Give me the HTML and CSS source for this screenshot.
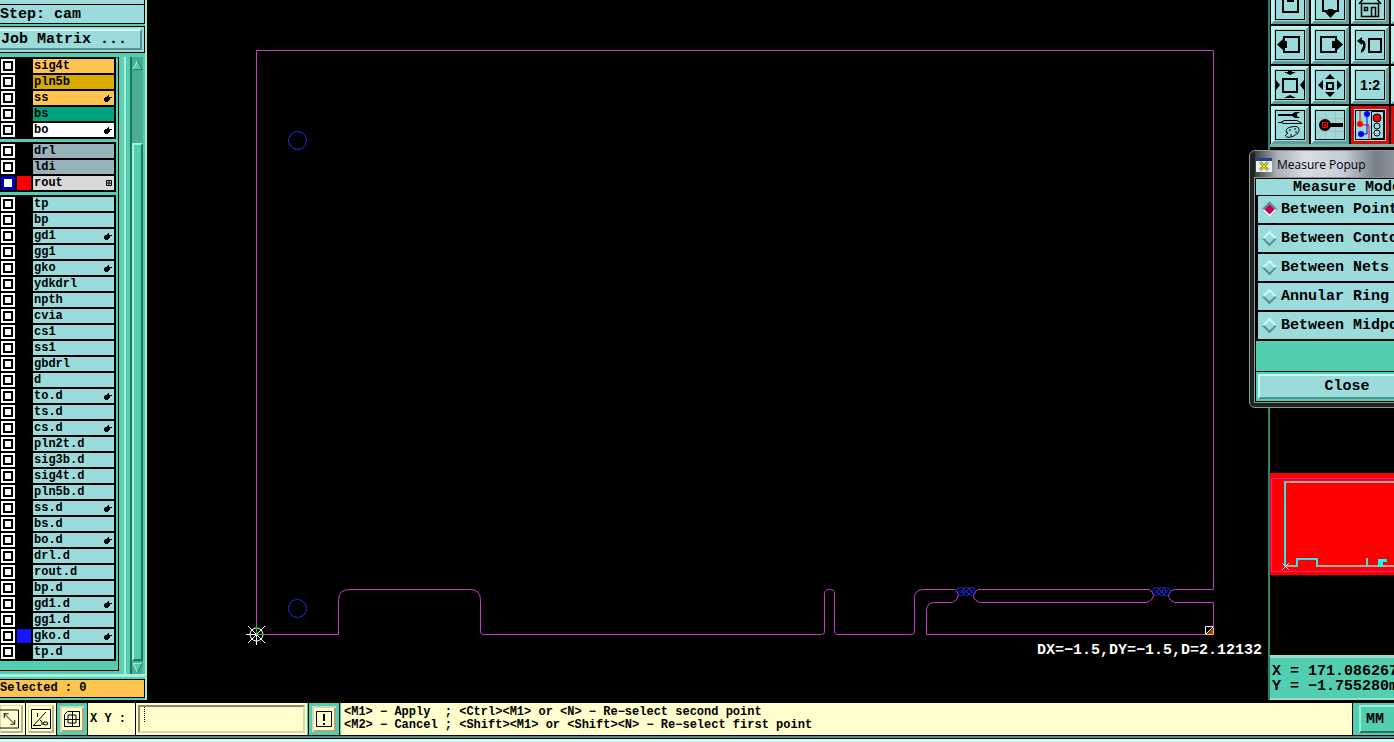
FILE: index.html
```html
<!DOCTYPE html>
<html lang="en">
<head>
  <meta charset="UTF-8">
  <title>Graphic Editor</title>
  <link rel="stylesheet" href="styles.css">
</head>
<body>

  <svg class="defs" width="0" height="0">
    <symbol id="hand" viewBox="0 0 8 7"><path d="M4 0H5V2H8V3H6V5H5V6H4V7H1V6H0V3H1V2H3V1H4Z"/></symbol>
    <symbol id="grid" viewBox="0 0 6 6"><path d="M.5.5H5.5V5.5H.5ZM3 .5V5.5M.5 3H5.5" fill="none" stroke="#000"/></symbol>
  </svg>

  <div class="workspace">
    <aside class="sidebar">
      <div class="field field-top"></div>
      <div class="field">Step: cam</div>
      <div class="button-frame"><button class="matrix">Job Matrix ...</button></div>
      <div class="list-area">
        <div class="layers" id="layers"></div>
        <div class="groove"></div>
        <div class="scrollbar">
          <svg class="arrow" viewBox="0 0 12 12"><path d="M6 1L11 11H1Z" fill="#52cfb0"/><path d="M6 1L1 11" stroke="#b5f2e4" fill="none"/><path d="M6 1L11 11H1" stroke="#27715f" fill="none"/></svg>
          <div class="trough"></div>
          <div class="thumb"></div>
          <svg class="arrow" viewBox="0 0 12 12"><path d="M1 1H11L6 11Z" fill="#52cfb0"/><path d="M11 1H1L6 11" stroke="#b5f2e4" fill="none"/><path d="M11 1L6 11" stroke="#27715f" fill="none"/></svg>
        </div>
      </div>
      <div class="selected">Selected : 0</div>
    </aside>

    <main class="canvas">
      <svg viewBox="147 0 1121 702">
        <g class="outline">
          <path d="M256.500 634.500V50.500H1213.500V589.500H1175.500Q1168.500 590.500 1168.500 596.500Q1169.500 600.500 1174.500 602.500H1213.500V634.500H926.500V609.500Q927.500 602.500 934.500 602.500H952.500Q958.500 599.500 958.500 594.500Q957.500 590.500 954.500 589.500H922.500Q914.500 590.500 914.500 597.500V631.500Q914.500 634.500 911.500 634.500H837.500Q834.500 634.500 834.500 631.500V593.500Q834.500 589.500 829.500 589.500T824.500 593.500V631.500Q824.500 634.500 821.500 634.500H483.500Q480.500 634.500 480.500 631.500V600.500Q480.500 589.500 470.500 589.500H349.500Q338.500 589.500 338.500 600.500V634.500Z"/>
          <path d="M977.500 589.500H1149.500Q1153.500 592.500 1153.500 595.500Q1152.500 600.500 1146.500 602.500H980.500Q973.500 600.500 973.500 595.500Q974.500 591.500 977.500 589.500Z"/>
        </g>
        <g class="hole">
          <circle cx="297.500" cy="140.500" r="9"/>
          <circle cx="297.500" cy="608.500" r="9"/>
          <circle cx="960.500" cy="591.500" r="4"/><circle cx="966.500" cy="591.500" r="4"/><circle cx="971.500" cy="591.500" r="4"/>
          <circle cx="960.500" cy="591.500" r="1"/><circle cx="966.500" cy="591.500" r="1"/><circle cx="971.500" cy="591.500" r="1"/>
          <circle cx="1156.500" cy="591.500" r="4"/><circle cx="1161.500" cy="591.500" r="4"/><circle cx="1166.500" cy="591.500" r="4"/>
          <circle cx="1156.500" cy="591.500" r="1"/><circle cx="1161.500" cy="591.500" r="1"/><circle cx="1166.500" cy="591.500" r="1"/>
        </g>
        <g class="origin">
          <circle cx="256.500" cy="634.500" r="6.500"/>
          <path d="M246 634.500H256M256.500 635V645M256.500 624V634M248 626L265 643M265 626L248 643"/>
          <path class="axis" d="M256.500 624V634.500H266"/>
        </g>
        <path d="M1207 634H1213V628Z" fill="#b33b00"/>
        <path d="M1206 634.500H1213.500V628" stroke="#e3d01c" fill="none"/>
        <path d="M1213 626.500H1205.500V634M1206 634L1213 627" class="cursor"/>
        <text x="1037" y="654">DX=−1.5,DY=−1.5,D=2.12132</text>
      </svg>
    </main>

    <aside class="right-panel">
      <div class="tools">
        <button class="tool" aria-label="Pan up"><svg viewBox="0 0 30 30"><rect x="8" y="8" width="15" height="14" class="s2"/><path d="M12 2H19V12H12Z"/></svg></button>
        <button class="tool" aria-label="Pan down"><svg viewBox="0 0 30 30"><rect x="8" y="6" width="15" height="15" class="s2"/><path d="M13 19H18V22H21L15.500 28L10 22H13Z"/></svg></button>
        <button class="tool" aria-label="Home"><svg viewBox="0 0 30 30"><path class="s1" d="M4 14L9 8H21L26 14M6.500 13.500H23.500V26.500H6.500ZM16.500 26V17.500H20.500V26M9.500 17.500H12.500V20.500H9.500ZM20.500 8V4" stroke-width="1.500"/></svg></button>
        <button class="tool" aria-label="More"></button>

        <button class="tool" aria-label="Pan left"><svg viewBox="0 0 30 30"><rect x="9" y="7" width="15" height="15" class="s2"/><path d="M2 14.500L8 9V11H12V18H8V20Z"/></svg></button>
        <button class="tool" aria-label="Pan right"><svg viewBox="0 0 30 30"><rect x="6" y="7" width="15" height="15" class="s2"/><path d="M28 14.500L22 9V11H17V18H22V20Z"/></svg></button>
        <button class="tool" aria-label="Previous view"><svg viewBox="0 0 30 30"><rect x="14" y="9" width="12" height="13" class="s2"/><path d="M2 11L7 7V10C12 10 12 21 6 23V20C8 18 9 14 7 13V15Z"/></svg></button>
        <button class="tool" aria-label="More"></button>

        <button class="tool" aria-label="Zoom out"><svg viewBox="0 0 30 30"><rect x="8" y="9" width="14" height="13" class="s2"/><path d="M9 2H13V0H17V2H21L15 5ZM9 28L15 25L21 28ZM1 10L5 15L1 20ZM29 10L25 15L29 20Z"/></svg></button>
        <button class="tool" aria-label="Zoom in"><svg viewBox="0 0 30 30"><rect x="12" y="13" width="6" height="6" class="s2"/><path d="M15 4L20 9H10ZM15 27L20 22H10ZM3 15L8 10V20ZM27 15L22 10V20Z"/></svg></button>
        <button class="tool" aria-label="Zoom 1:2"><svg viewBox="0 0 30 30"><text x="15" y="20" class="ratio">1:2</text></svg></button>
        <button class="tool" aria-label="More"></button>

        <button class="tool" aria-label="Edit tools"><svg viewBox="0 0 30 30"><path d="M3 4H17L20 2H25L22 4V6L25 8H20L17 6H3Z"/><path class="s1" d="M3 12.500H6L9 10.500H22L27 13.500H9L6 12.500M11.500 22.500C10 18 15 16.500 21 16.500C26 17 24 24 20 25C17 28 10 28 10.500 25L13 23ZM14 20H16M19 19H21M20 22H22M15 25H17"/></svg></button>
        <button class="tool" aria-label="Probe"><svg viewBox="0 0 30 30"><path d="M10.500 0V30M20.500 0V30M0 8.500H30M0 21.500H30" stroke="#b9b4bd"/><circle cx="10" cy="15" r="6"/><path d="M15 13H28V17H15Z"/><path d="M7.500 12.500H12.500V17.500H7.500ZM9.500 14.500H11V16H9.500Z" fill="none" stroke="#f00"/></svg></button>
        <button class="tool active" aria-label="Measure"><svg viewBox="0 0 30 30"><path d="M5 1V15M5 15H14V29" stroke="#f00" fill="none"/><path d="M12 5V24H6" stroke="#00f" stroke-width="1" fill="none"/><g fill="#00f"><circle cx="12" cy="4" r="3"/><circle cx="6" cy="24" r="3"/></g><circle cx="5" cy="14" r="3" fill="#f00"/><path class="s1" d="M16.500 1.500H28.500V28.500H16.500Z"/><circle cx="22" cy="8" r="4" fill="#f00" stroke="#000"/><circle cx="22" cy="16" r="3" class="s1"/><circle cx="22" cy="23" r="3" class="s1"/></svg></button>
        <button class="tool active" aria-label="More"></button>
      </div>
      <svg class="minimap" viewBox="0 0 124 102">
        <rect width="124" height="102" fill="#f00"/>
        <path d="M124 5.500H1.500V98.500H124" stroke="#ff1ca0" fill="none"/>
        <path d="M14 9H124M15 93H28M47 93H124" stroke="#b2aaa5" stroke-width="2"/>
        <path d="M15 9V93M27 94V86H47V94M97 85V94" stroke="#35e4e4" stroke-width="2" fill="none"/>
        <path d="M108 93V86H117V89H113V94H108Z" fill="#0ff"/>
        <path d="M12 90L19 97M19 90L12 97" stroke="#b8f5f0"/>
      </svg>
      <div class="coords">X = 171.086267<br>Y = −1.755280m</div>
    </aside>

    <section class="popup">
      <header class="popup-title">
        <svg viewBox="0 0 16 16"><rect x="0" y="1" width="16" height="14" fill="#e9f0f5"/><path d="M0 1H16V4H0Z" fill="#24418f"/><path d="M4 5L12 13M12 5L4 13" stroke="#999c0b" stroke-width="3"/><path d="M4 5L12 13M12 5L4 13" stroke="#ede334"/></svg>
        Measure Popup
      </header>
      <form class="popup-body">
        <div class="mode-title">Measure Mode</div>
        <div class="modes">
          <label><input type="radio" name="mode" checked>Between Points</label>
          <label><input type="radio" name="mode">Between Contours</label>
          <label><input type="radio" name="mode">Between Nets</label>
          <label><input type="radio" name="mode">Annular Ring</label>
          <label><input type="radio" name="mode">Between Midpoints</label>
        </div>
        <div class="popup-footer"><button type="button">Close</button></div>
      </form>
    </section>
  </div>

  <footer class="bottom-bar">
    <button class="snap snap-first" aria-label="Snap to end"><svg viewBox="0 0 20 20"><path class="s1" d="M0 .5H19.500V19.500H0M4 4L15 15M4.500 9V4.500H9M15.500 11V15.500H11"/></svg></button>
    <button class="snap" aria-label="Snap angle"><svg viewBox="0 0 20 20"><path class="s1" d="M.5.5H19.500V19.500H.5ZM2 17L15 3M2 16.500H10M6.500 4V8M9 11Q12 12 11 16M13 13H16L17 15L15 16L12 15Z"/></svg></button>
    <button class="snap pressed" aria-label="Snap to grid"><svg viewBox="0 0 16 16"><path class="s1" d="M3.500.5H15.500V15.500H.5V3.500ZM8.500.5V15.500M.5 8.500H15.500M4 4H12V12H4Z"/></svg></button>
    <label class="xy-label" for="xy">X Y :</label>
    <div class="xy-box"><input id="xy" type="text"></div>
    <button class="snap pressed" aria-label="Apply"><svg viewBox="0 0 16 16"><path class="s1" d="M.5.5H15.500V15.500H.5Z"/><path d="M7 3H9V10H7ZM7 12H9V14H7Z"/></svg></button>
    <div class="message">&lt;M1&gt; − Apply&nbsp; ; &lt;Ctrl&gt;&lt;M1&gt; or &lt;N&gt; − Re−select second point<br>&lt;M2&gt; − Cancel ; &lt;Shift&gt;&lt;M1&gt; or &lt;Shift&gt;&lt;N&gt; − Re−select first point</div>
    <div class="units"><button>MM</button></div>
  </footer>

  <script>
    // name, row colour, mark at the right end, display colour
    const groups = [
      [["sig4t", "signal"], ["pln5b", "plane"], ["ss", "signal", "hand"], ["bs", "mask"], ["bo", "comp", "hand"]],
      [["drl", "drill"], ["ldi", "drill"], ["rout", "rout", "grid", "red"]],
      [["tp"], ["bp"], ["gd1", "", "hand"], ["gg1"], ["gko", "", "hand"], ["ydkdrl"], ["npth"], ["cvia"], ["cs1"], ["ss1"],
       ["gbdrl"], ["d"], ["to.d", "", "hand"], ["ts.d"], ["cs.d", "", "hand"], ["pln2t.d"], ["sig3b.d"], ["sig4t.d"],
       ["pln5b.d"], ["ss.d", "", "hand"], ["bs.d"], ["bo.d", "", "hand"], ["drl.d"], ["rout.d"], ["bp.d"],
       ["gd1.d", "", "hand"], ["gg1.d"], ["gko.d", "", "hand", "blue"], ["tp.d"]]
    ];

    document.getElementById("layers").innerHTML = groups.map(group => `
      <div class="group">${group.map(([name, kind, mark, color]) => `
        <div class="layer">
          <input type="checkbox" id="layer-${name}" ${name === "rout" ? "checked" : ""}>
          <span class="swatch ${color || ""}"></span>
          <label class="${kind || ""}" for="layer-${name}">${name}${mark ? `<svg class="mark ${mark}"><use href="#${mark}"/></svg>` : ""}</label>
        </div>`).join("")}
      </div>`).join("");
  </script>

</body>
</html>
```
FILE: styles.css
```css
* {
  box-sizing: border-box;
}
body {
  margin: 0;
  height: 100vh;
  display: flex;
  flex-direction: column;
  overflow: hidden;
  background: #000;
  color: #000;
  font: bold 15px "Liberation Mono", monospace;
}
button, input {
  font: inherit;
  color: inherit;
  margin: 0;
  padding: 0;
  border-radius: 0;
}
svg {
  display: block;
}
.defs {
  position: absolute;
}
.s1 {
  fill: none;
  stroke: #000;
}
.s2 {
  fill: none;
  stroke: #000;
  stroke-width: 2;
}
.workspace {
  position: relative;
  flex: 1;
  min-height: 0;
  display: flex;
}

/* layer list */
.sidebar {
  width: 147px;
  margin-bottom: 2px;
  display: flex;
  flex-direction: column;
  background: #52cfb0;
  border-right: 2px solid #9febd8;
}
.field {
  height: 19px;
  border-right: 1px solid #000;
  border-bottom: 1px solid #000;
  background: #9cdbdb;
  line-height: 19px;
  white-space: nowrap;
}
.field-top {
  height: 5px;
}
.button-frame {
  margin: 2px 0 4px;
  padding: 2px 2px 2px 0;
  border: 1px solid #000;
  border-left: 0;
  background: #9cdbdb;
}
.matrix {
  width: 100%;
  height: 21px;
  padding-left: 1px;
  border: 2px solid;
  border-color: #c9fbf7 #579191 #579191 #9cdbdb;
  border-left: 0;
  background: #9cdbdb;
  text-align: left;
  line-height: 17px;
}
.list-area {
  flex: 1;
  min-height: 0;
  display: flex;
  border-bottom: 3px solid #a8eedd;
  box-shadow: inset 0 1px #27715f;
}
.layers {
  width: 119px;
  margin-bottom: 3px;
  display: flex;
  flex-direction: column;
  gap: 3px;
  border-right: 1px solid #000;
  border-bottom: 1px solid #000;
  overflow: hidden;
}
.group {
  width: 116px;
  padding-bottom: 2px;
  background: #000;
}
.layer {
  height: 16px;
  padding: 2px 2px 0 1px;
  display: flex;
  gap: 2px;
  font-size: 12px;
}
.layer input {
  appearance: none;
  width: 14px;
  height: 14px;
  border: 2px solid #fff;
  background: #fff;
  box-shadow: inset 0 0 0 2px #000;
}
.layer input:checked {
  border-color: #0000b4;
  box-shadow: inset 0 0 0 1px #0000b4;
}
.swatch {
  width: 14px;
}
.red {
  background: #f00;
}
.blue {
  background: #1414ff;
}
.layer label {
  flex: 1;
  padding: 0 2px 0 1px;
  display: flex;
  align-items: center;
  justify-content: space-between;
  background: #9cdbdb;
  line-height: 14px;
}
.layer .signal {
  background: #ffc44f;
}
.layer .plane {
  background: #d9aa00;
}
.layer .mask {
  background: #00a47c;
}
.layer .comp {
  background: #fff;
}
.layer .drill {
  background: #98b2bc;
}
.layer .rout {
  background: #d9d9d9;
}
.mark {
  width: 8px;
  height: 7px;
}
.mark.grid {
  width: 6px;
  height: 6px;
}
.groove {
  width: 13px;
  background: linear-gradient(90deg, #52cfb0 2px, #62d2b7 2px 5px, #a8eedd 5px 7px, #52cfb0 7px 11px, #27715f 11px);
}
.scrollbar {
  flex: 1;
  padding-top: 2px;
  display: flex;
  flex-direction: column;
  background: #48af96;
  border-right: 2px solid #52cfb0;
}
.arrow {
  width: 11px;
  height: 12px;
}
.trough {
  height: 72px;
}
.thumb {
  flex: 1;
  margin-bottom: 1px;
  border: 2px solid;
  border-color: #a8eedd #27715f #27715f #a8eedd;
  background: #52cfb0;
}
.selected {
  margin: 2px 0;
  border: 1px solid #000;
  border-left: 0;
  background: #ffc44f;
  font-size: 12px;
  line-height: 17px;
}

/* drawing */
.canvas {
  flex: 1;
  min-width: 0;
}
.canvas svg {
  width: 100%;
  height: 100%;
}
.outline {
  fill: none;
  stroke: #c63fc6;
}
.hole {
  fill: none;
  stroke: #262ae0;
}
.origin, .cursor {
  fill: none;
  stroke: #fff;
}
.axis {
  stroke: #2bb52b;
}
.canvas text {
  fill: #fff;
}

/* right side */
.right-panel {
  width: 126px;
  margin-bottom: 2px;
  display: flex;
  flex-direction: column;
  border-left: 2px solid #2d806c;
  overflow: hidden;
}
.tools {
  display: grid;
  grid-template-columns: repeat(4, 38px);
  grid-template-rows: 24px repeat(3, 38px);
  gap: 2px;
  padding: 0 0 0 1px;
  align-items: end;
  border-bottom: 3px solid #79b5ac;
}
.tool {
  height: 38px;
  padding: 1px;
  border: 3px solid;
  border-color: #bdf3ee #609e9e #609e9e #bdf3ee;
  background: #9cdbdb;
}
.tool svg {
  width: 30px;
  height: 30px;
  outline: 1px solid #000;
  outline-offset: -1px;
}
.tool.active {
  border-color: #d80c0c;
}
.ratio {
  font: bold 14px "Liberation Sans", sans-serif;
  text-anchor: middle;
}
.minimap {
  width: 100%;
  margin: auto 0 80px;
}
.coords {
  padding: 6px 2px 4px;
  border-top: 3px solid #9bdfce;
  border-bottom: 2px solid #9bdfce;
  background: #52cfb0;
  line-height: 15px;
  white-space: nowrap;
}

/* measure dialog, hangs past the right edge of the window */
.popup {
  position: absolute;
  top: 150px;
  right: -52px;
  width: 197px;
  padding: 0 6px 5px 5px;
  border: 1px solid #8d9896;
  border-radius: 6px;
  background: #1d2321;
}
.popup-title {
  height: 27px;
  margin-right: -6px;
  padding-left: 1px;
  display: flex;
  align-items: center;
  gap: 5px;
  background: linear-gradient(90deg, #39403f, #a9b0b8 22px, #d9dde3 50px, #c5ccd9 90px, #767f88 120px, #c4ccd8);
  font: 12px "Open Sans", sans-serif;
}
.popup-title svg {
  width: 16px;
  height: 16px;
}
.popup-body {
  border: 1px solid #000;
  outline: 1px solid #8d9896;
  background: #52cfb0;
}
.mode-title {
  height: 17px;
  border-bottom: 1px solid #000;
  background: #9cdbdb;
  line-height: 17px;
  text-align: center;
}
.modes {
  padding: 0 2px 2px;
  display: grid;
  gap: 2px;
  background: #000;
}
.modes label {
  height: 27px;
  padding-left: 6px;
  display: flex;
  align-items: center;
  gap: 6px;
  background: #9cdbdb;
  white-space: nowrap;
}
.modes input {
  appearance: none;
  flex: none;
  width: 11px;
  height: 11px;
  border: 2px solid;
  border-color: #c9fbf7 #579191 #579191 #c9fbf7;
  transform: rotate(45deg);
}
.modes input:checked {
  border-color: #579191 #e6f3f3 #e6f3f3 #579191;
  background: #c2004e;
}
.popup-footer {
  margin-top: 30px;
  padding: 2px;
  border-top: 1px solid #000;
}
.popup-footer button {
  width: 100%;
  height: 25px;
  border: 2px solid;
  border-color: #c9fbf7 #579191 #579191 #c9fbf7;
  background: #9cdbdb;
}

/* status line */
.bottom-bar {
  height: 40px;
  padding-top: 1px;
  display: flex;
  gap: 1px;
  border-bottom: 3px solid #ccfffa;
  box-shadow: inset 0 -1px #000, inset 0 -3px #568e83, inset 0 -4px #000;
  font-size: 12px;
}
.bottom-bar > * {
  height: 32px;
}
.snap {
  width: 30px;
  display: flex;
  align-items: center;
  justify-content: center;
  border: 2px solid #ffffce;
  background: #ffffce;
  box-shadow: inset 1px 1px #d8d8ae, inset -2px -2px #b3b38c;
}
.snap svg {
  width: 20px;
  height: 20px;
}
.snap-first {
  width: 25px;
  padding-right: 4px;
  border-left: 0;
}
.pressed {
  border: 3px solid #52cfb0;
  box-shadow: inset 2px 2px #d8d8ae, inset -2px -2px #a6a683;
}
.pressed svg {
  width: 16px;
  height: 16px;
}
.xy-label {
  width: 47px;
  padding-left: 2px;
  background: #ffffce;
  line-height: 32px;
}
.xy-box {
  width: 172px;
  padding: 2px;
  background: #ffffce;
  border-right: 1px solid #52cfb0;
}
.xy-box input {
  width: 100%;
  height: 28px;
  padding: 0 5px;
  border: 2px solid;
  border-color: #8b8b69 #d8d8ae #d8d8ae #8b8b69;
  background: repeating-linear-gradient(#000 0 1px, #ffffce 1px 2px) 4px 0 / 1px 15px no-repeat #ffffce;
}
.message {
  flex: 1;
  padding: 3px;
  border-left: 1px solid #52cfb0;
  background: #ffffce;
  line-height: 13px;
  white-space: nowrap;
}
.units {
  width: 41px;
  padding: 2px 0 2px 6px;
  background: #52cfb0;
}
.units button {
  width: 52px;
  height: 28px;
  padding-left: 5px;
  border: 2px solid;
  border-color: #9febd8 #27715f #27715f #9febd8;
  background: #52cfb0;
  text-align: left;
  font-size: 15px;
}
```
